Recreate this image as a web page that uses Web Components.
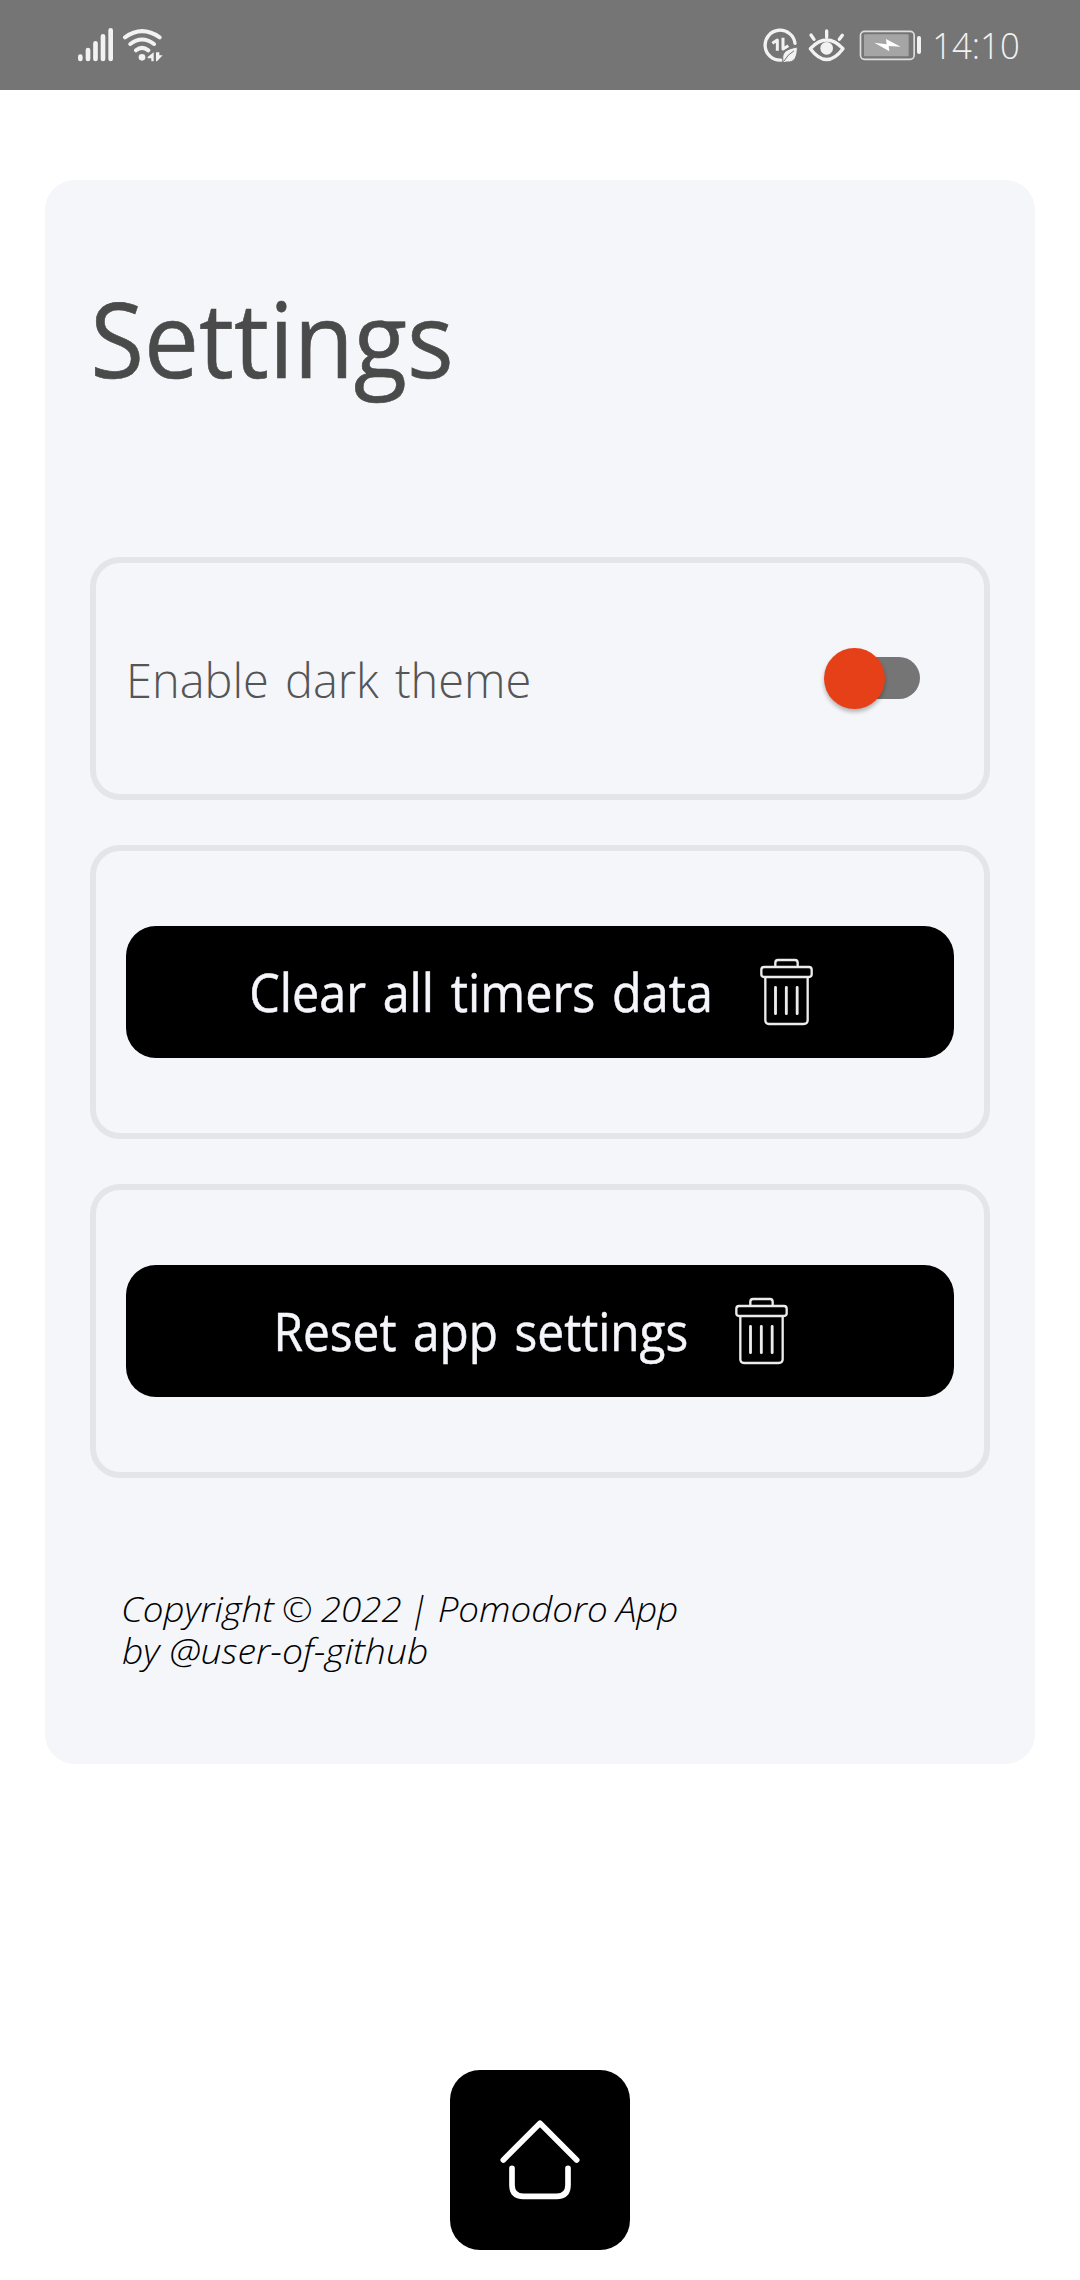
<!DOCTYPE html>
<html lang="en">
<head>
<meta charset="utf-8">
<meta name="viewport" content="width=device-width">
<title>Settings</title>
<style>
html, body { margin: 0; background: #fff; }
body { font-family: "Open Sans", "Noto Sans", sans-serif; }
</style>
</head>
<body>
<settings-screen></settings-screen>
<script>
const define = (name, html, setup) => customElements.define(name, class extends HTMLElement {
  constructor() {
    super();
    this.attachShadow({ mode: 'open' }).innerHTML = html;
  }
  connectedCallback() { if (setup) setup.call(this); }
});

/* One line of text whose glyphs are condensed to fill the width given in pixels. */
define('fit-line', `
<style>
:host { display: block; flex: none; white-space: nowrap; }
span { display: inline-block; transform-origin: 0 50%; vertical-align: top; }
b { display: inline-block; font-weight: inherit; transform: skewX(-11deg); }
</style><span></span>`, function () {
  const span = this.shadowRoot.querySelector('span');
  span.innerHTML = this.getAttribute('text').replace('|', '<b>|</b>');
  const width = +this.getAttribute('width');
  this.style.width = width + 'px';
  const cs = getComputedStyle(span);
  const ctx = document.createElement('canvas').getContext('2d');
  ctx.font = `${cs.fontStyle} ${cs.fontWeight} ${cs.fontSize} ${cs.fontFamily}`;
  const m = ctx.measureText(span.textContent);
  const advance = span.getBoundingClientRect().width;
  const right = advance - (m.width - m.actualBoundingBoxRight);
  const scale = width / (right + m.actualBoundingBoxLeft);
  span.style.transform = `translateX(${m.actualBoundingBoxLeft * scale}px) scaleX(${scale})`;
});

define('status-bar', `
<style>
:host { display: flex; box-sizing: border-box; height: 90px; background: #757575; color: #f2f2f2; padding: 0 62px 0 78px; align-items: flex-start; }
svg { display: block; flex: none; }
.left { width: 85px; height: 34px; margin-top: 28px; }
.right { width: 160px; height: 34px; margin: 28.3px 12px 0 auto; }
fit-line { font-size: 36.5px; font-weight: 300; line-height: 90px; }
</style>
<svg class="left" viewBox="54 53 255 102" fill="none" stroke="#f2f2f2" stroke-linecap="round">
  <path stroke-width="14" d="M61 139v7M84 119v27M106.500 99v47M129 78v68M152 60v86"/>
  <path stroke-width="12" d="M195 81Q246 44 299 81M211 101Q246 74 282 101M228 120Q246 105 265 120"/>
  <circle cx="246" cy="141" r="10" fill="#f2f2f2" stroke="none"/>
  <path fill="#f2f2f2" stroke="none" d="M281 126v27h-7v-9h-11v-4zM288 126v27h3l17-18h-10v-9z"/>
</svg>
<svg class="right" viewBox="40 55 480 102" fill="none" stroke="#f2f2f2" stroke-linecap="round" stroke-linejoin="round">
  <path stroke-width="10" d="M94 151.500A45 45 0 1 1 136 101"/>
  <path stroke-width="9" stroke-linecap="butt" d="M83 123V91L68 101M100 84v34L116 108"/>
  <path fill="#f2f2f2" stroke="#757575" stroke-width="3" d="M101 159C94 130 105 119 143 112C143 139 137 160 111 157Z"/>
  <path stroke="#757575" stroke-width="3" d="M103 154Q114 134 132 124"/>
  <path stroke-width="10" d="M182 117Q231 65 280 117Q231 182 182 117ZM231 64v18M184 76l9 13M278 77l-9 12"/>
  <circle cx="231" cy="116" r="19" fill="#f2f2f2" stroke="none"/>
  <rect x="332.500" y="65" width="161" height="84" rx="12" stroke="#dedede" stroke-width="5"/>
  <rect x="343" y="74" width="134" height="66" rx="4" fill="#a5a5a5" stroke="none"/>
  <path fill="#fff" stroke="none" d="M374 99L411 104L409 88L453 111L417 109L419 125Z"/>
  <path stroke-width="12" d="M508 85v42"/>
</svg>
<fit-line text="14:10" width="83"></fit-line>`);

define('trash-icon', `
<style>:host { display: block; flex: none; } svg { display: block; width: 53px; height: 68px; }</style>
<svg viewBox="599 384 159 204" fill="none" stroke="#ececec" stroke-width="7">
  <path d="M645 410v-12q0-8 8-8h51q8 0 8 8v12"/>
  <rect x="603" y="411" width="151" height="30" rx="8"/>
  <path d="M615 441v130q0 11 11 11h104q12 0 12-11V441"/>
  <path stroke-width="8.500" stroke-linecap="round" d="M645.500 472v79M678 472v79M710.500 472v79"/>
</svg>`);

define('home-button', `
<style>
:host { display: flex; width: 180px; height: 180px; border-radius: 30px; background: #000; }
svg { width: 180px; height: 180px; }
</style>
<svg viewBox="60 60 540 540" fill="none" stroke="#fff" stroke-width="17" stroke-linecap="round" stroke-linejoin="round">
  <path d="M220 330L330 220L440 330M246 355v50q0 34 34 34h100q34 0 34-34v-50"/>
</svg>`);

define('toggle-switch', `
<style>
:host { display: flex; align-items: center; box-sizing: border-box; width: 90px; height: 42px; border-radius: 21px; background: #757576; }
i { display: block; flex: none; width: 61px; height: 61px; margin-left: -6px; border-radius: 50%; background: #e54017; box-shadow: 0 3px 4px rgba(0,0,0,.28); }
</style><i></i>`);

define('settings-card', `
<style>
:host { display: flex; box-sizing: border-box; border: 6px solid #e4e5e9; border-radius: 30px; align-items: center; padding: 0 30px; }
</style><slot></slot>`);

define('action-button', `
<style>
:host { display: flex; flex: 1; box-sizing: border-box; height: 132px; border-radius: 30px; background: #000; color: #f5f6fb; align-items: flex-start; }
::slotted(trash-icon) { margin-top: 32px; }
</style><slot></slot>`);

define('settings-screen', `
<style>
:host { display: flex; flex-direction: column; height: 2280px; align-items: stretch; }
main { display: flex; flex-direction: column; box-sizing: border-box; margin: 90px 45px 0; height: 1584px; padding: 78px 45px 0; border-radius: 30px; background: #f4f6fa; }
.title { font-size: 105px; line-height: 160px; margin-left: 4.700px; color: #4a4a4a; -webkit-text-stroke: .6px #4a4a4a; }
.cards { display: flex; flex-direction: column; gap: 45px; margin-top: 139px; }
.theme { height: 243px; justify-content: space-between; padding: 0 64px 0 33.800px; }
.theme fit-line { font-size: 48px; font-weight: 300; line-height: 80px; margin-top: 2px; color: #555; word-spacing: 4px; }
.theme toggle-switch { margin-top: -1px; }
.action { height: 294px; }
.action fit-line { font-size: 52.500px; line-height: 132px; word-spacing: 4.500px; -webkit-text-stroke: .5px #f5f6fb; }
.clear { padding-left: 125.800px; gap: 51px; }
.reset { padding-left: 152px; gap: 48.500px; }
footer { margin: 109px 0 0 33px; font-size: 35.500px; font-style: italic; font-weight: 300; line-height: 42px; color: #000; }
footer .owner { word-spacing: -1.500px; }
home-button { margin: 306px auto 0; }
</style>
<status-bar></status-bar>
<main>
  <fit-line class="title" text="Settings" width="355"></fit-line>
  <section class="cards">
    <settings-card class="theme">
      <fit-line text="Enable dark theme" width="399"></fit-line>
      <toggle-switch></toggle-switch>
    </settings-card>
    <settings-card class="action">
      <action-button class="clear"><fit-line text="Clear all timers data" width="457"></fit-line><trash-icon></trash-icon></action-button>
    </settings-card>
    <settings-card class="action">
      <action-button class="reset"><fit-line text="Reset app settings" width="408.500"></fit-line><trash-icon></trash-icon></action-button>
    </settings-card>
  </section>
  <footer>
    <fit-line class="owner" text="Copyright © 2022 | Pomodoro App" width="554"></fit-line>
    <fit-line text="by @user-of-github" width="304"></fit-line>
  </footer>
</main>
<home-button></home-button>`);
</script>
</body>
</html>
